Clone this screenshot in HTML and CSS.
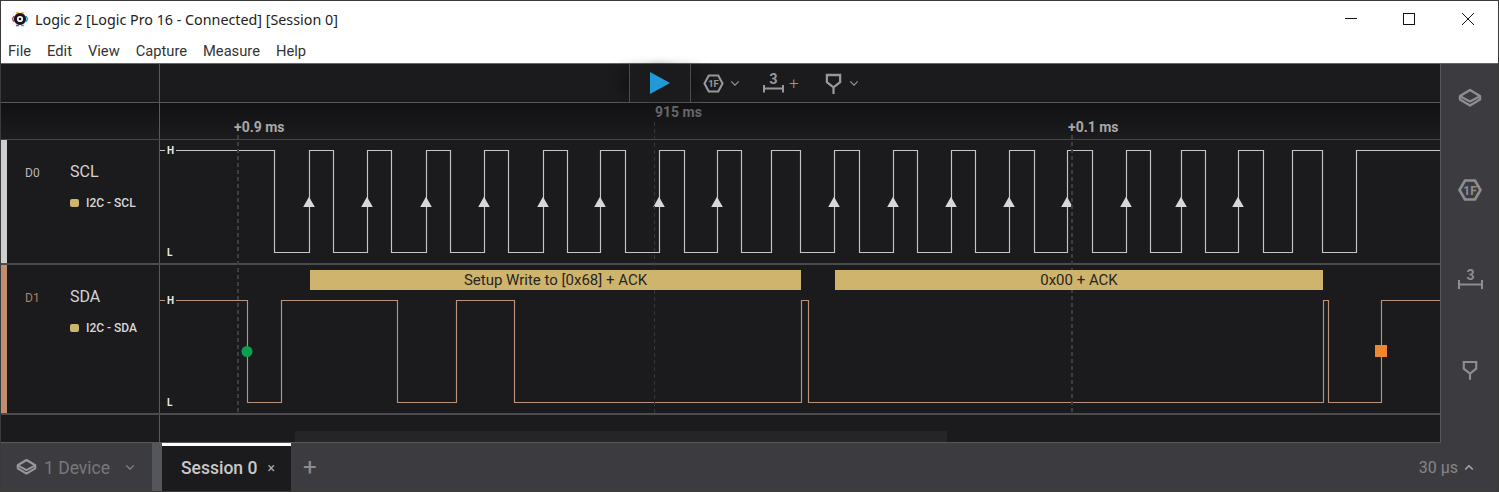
FILE: index.html
```html
<!DOCTYPE html>
<html lang="en">
<head>
<meta charset="utf-8">
<title>Logic 2</title>
<link rel="stylesheet" href="styles.css">
</head>
<body>
<svg class="defs" width="0" height="0" aria-hidden="true">
  <symbol id="i-layers" viewBox="0 0 24 20">
    <path d="M12 2 L22 8 V11.5 L12 17.5 L2 11.5 V8 Z" fill="none" stroke="currentColor" stroke-width="2.400" stroke-linejoin="round"/>
    <path d="M2.5 8.5 L12 13.5 L21.500 8.500" fill="none" stroke="currentColor" stroke-width="2.200"/>
  </symbol>
  <symbol id="i-trigger" viewBox="0 0 18 22">
    <path d="M2 2 H16 V9.500 L9 15 L2 9.500 Z M9 15 V22" fill="none" stroke="currentColor" stroke-width="2.400"/>
  </symbol>
  <symbol id="i-chev" viewBox="0 0 12 8">
    <path d="M1.500 1.500 L6 6 L10.500 1.500" fill="none" stroke="currentColor" stroke-width="1.400"/>
  </symbol>
</svg>

<div class="window">
  <header class="titlebar">
    <svg class="app-icon" viewBox="0 0 18 18">
      <rect x="0.500" y="0.500" width="17" height="17" rx="4" fill="#f7f7f7"/>
      <path d="M3 6 L1.500 9 L3 12" fill="none" stroke="#e33c8b" stroke-width="1.500"/>
      <path d="M15 6 L16.500 9 L15 12" fill="none" stroke="#2a9ee0" stroke-width="1.500"/>
      <path d="M5 3 H8" stroke="#f0a020" stroke-width="1.500"/>
      <path d="M10 3 H13" stroke="#e8c020" stroke-width="1.500"/>
      <path d="M5 15.500 H8" stroke="#7a4fd0" stroke-width="1.500"/>
      <path d="M10 15.500 H13" stroke="#2fb8c8" stroke-width="1.500"/>
      <circle cx="9" cy="9" r="4.600" fill="none" stroke="#16161a" stroke-width="3"/>
      <circle cx="9" cy="9" r="1.300" fill="#16161a"/>
    </svg>
    <span class="title-text">Logic 2 [Logic Pro 16 - Connected] [Session 0]</span>
    <div class="win-controls">
      <svg class="win-btn" viewBox="0 0 12 12"><path d="M0 5.500 H12" stroke="#111" stroke-width="1"/></svg>
      <svg class="win-btn" viewBox="0 0 12 12"><rect x="0.500" y="0.500" width="11" height="11" fill="none" stroke="#111" stroke-width="1"/></svg>
      <svg class="win-btn win-close" viewBox="0 0 12 12"><path d="M0 0 L12 12 M12 0 L0 12" stroke="#111" stroke-width="1"/></svg>
    </div>
  </header>
  <nav class="menubar">
    <span>File</span><span>Edit</span><span>View</span><span>Capture</span><span>Measure</span><span>Help</span>
  </nav>

  <main class="main">
    <section class="workspace">
      <div class="toolbar-row">
        <div class="gutter"></div>
        <div class="toolbar">
          <div class="play-box">
            <svg class="play" viewBox="0 0 20 22"><path d="M0 0 L20 11 L0 22 Z" fill="#209bd8"/></svg>
          </div>
          <div class="tools">
            <svg class="tool-hex" viewBox="0 0 22 20">
              <path d="M6 1.500 H16 L20.500 10 L16 18.500 H6 L1.500 10 Z" fill="none" stroke="currentColor" stroke-width="2.200"/>
              <text x="11" y="14" text-anchor="middle" class="hex-label">1F</text>
            </svg>
            <svg class="chev chev-a"><use href="#i-chev"/></svg>
            <svg class="tool-measure" viewBox="0 -4 21 28">
              <text x="10.500" y="10.500" text-anchor="middle" class="measure-label">3</text>
              <path d="M1 12 V19.500 M20 12 V19.500 M1 15.500 H20" fill="none" stroke="currentColor" stroke-width="2"/>
            </svg>
            <span class="tool-plus">+</span>
            <svg class="tool-trigger"><use href="#i-trigger"/></svg>
            <svg class="chev chev-b"><use href="#i-chev"/></svg>
          </div>
        </div>
      </div>

      <div class="ruler-row">
        <div class="gutter"></div>
        <div class="ruler">
          <span class="tick tick-a">+0.9 ms</span>
          <span class="tick tick-mid">915 ms</span>
          <span class="tick tick-b">+0.1 ms</span>
        </div>
      </div>

      <div class="channel channel-scl">
        <div class="chan-label">
          <span class="swatch swatch-scl"></span>
          <span class="chan-id">D0</span>
          <div class="chan-info">
            <div class="chan-name">SCL</div>
            <div class="analyzer"><span class="dot"></span>I2C - SCL</div>
          </div>
        </div>
        <div class="lane">
          <svg class="wave" viewBox="160 140 1280 123">
            <path class="wave-scl" d="M160 150.500 H274.500 V252.500 H309.500 V150.500 H333.500 V252.500 H367.500 V150.500 H391.500 V252.500 H426.500 V150.500 H450.500 V252.500 H484.500 V150.500 H508.500 V252.500 H543.500 V150.500 H567.500 V252.500 H600.500 V150.500 H625.500 V252.500 H659.500 V150.500 H684.500 V252.500 H717.500 V150.500 H741.500 V252.500 H771.500 V150.500 H800.500 V252.500 H834.500 V150.500 H859.500 V252.500 H893.500 V150.500 H917.500 V252.500 H951.500 V150.500 H975.500 V252.500 H1009.500 V150.500 H1034.500 V252.500 H1067.500 V150.500 H1092.500 V252.500 H1126.500 V150.500 H1150.500 V252.500 H1181.500 V150.500 H1205.500 V252.500 H1238.500 V150.500 H1263.500 V252.500 H1292.500 V150.500 H1322.500 V252.500 H1356.500 V150.500 H1440"/>
            <path class="edge" d="M309 196.800 l5.800 10.300 h-11.600 Z M367 196.800 l5.800 10.300 h-11.600 Z M426 196.800 l5.800 10.300 h-11.600 Z M484 196.800 l5.800 10.300 h-11.600 Z M543 196.800 l5.800 10.300 h-11.600 Z M600 196.800 l5.800 10.300 h-11.600 Z M659 196.800 l5.800 10.300 h-11.600 Z M717 196.800 l5.800 10.300 h-11.600 Z M834 196.800 l5.800 10.300 h-11.600 Z M893 196.800 l5.800 10.300 h-11.600 Z M951 196.800 l5.800 10.300 h-11.600 Z M1009 196.800 l5.800 10.300 h-11.600 Z M1067 196.800 l5.800 10.300 h-11.600 Z M1126 196.800 l5.800 10.300 h-11.600 Z M1181 196.800 l5.800 10.300 h-11.600 Z M1238 196.800 l5.800 10.300 h-11.600 Z"/>
          </svg>
          <span class="level level-h-scl">H</span>
          <span class="level level-l-scl">L</span>
        </div>
      </div>

      <div class="channel channel-sda">
        <div class="chan-label">
          <span class="swatch swatch-sda"></span>
          <span class="chan-id chan-id-sda">D1</span>
          <div class="chan-info">
            <div class="chan-name">SDA</div>
            <div class="analyzer"><span class="dot"></span>I2C - SDA</div>
          </div>
        </div>
        <div class="lane">
          <svg class="wave" viewBox="160 265 1280 148">
            <path class="wave-sda" d="M160 300.500 H247.500 V402.500 H281.500 V300.500 H397.500 V402.500 H456.500 V300.500 H514.500 V402.500 H801.500 V300.500 H808.500 V402.500 H1323.500 V300.500 H1328.500 V402.500 H1381.500 V300.500 H1440"/>
            <circle cx="247" cy="351.500" r="5.500" fill="#0aa050"/>
            <rect x="1375" y="345" width="12" height="12" fill="#f0862e"/>
          </svg>
          <span class="level level-h-sda">H</span>
          <span class="level level-l-sda">L</span>
          <div class="frame frame-a">Setup Write to [0x68] + ACK</div>
          <div class="frame frame-b">0x00 + ACK</div>
        </div>
      </div>

      <div class="filler-row">
        <div class="gutter"></div>
        <div class="filler"><div class="scrollbar"></div></div>
      </div>

      <i class="guide guide-a"></i>
      <i class="guide guide-mid"></i>
      <i class="guide guide-b"></i>
    </section>

    <aside class="sidebar">
      <svg class="side-icon side-layers"><use href="#i-layers"/></svg>
      <svg class="side-icon side-hex" viewBox="0 0 24 22">
        <path d="M7 1.500 H17 L22.500 11 L17 20.500 H7 L1.500 11 Z" fill="none" stroke="currentColor" stroke-width="2.600"/>
        <text x="12" y="15.500" text-anchor="middle" class="hex-label-lg">1F</text>
      </svg>
      <svg class="side-icon side-measure" viewBox="0 -4 25 23">
        <text x="12.500" y="10" text-anchor="middle" class="measure-label-lg">3</text>
        <path d="M1 10 V19 M24 10 V19 M1 14.500 H24" fill="none" stroke="currentColor" stroke-width="2"/>
      </svg>
      <svg class="side-icon side-trigger"><use href="#i-trigger"/></svg>
    </aside>
  </main>

  <footer class="bottombar">
    <div class="device">
      <svg class="device-icon"><use href="#i-layers"/></svg>
      <span class="device-name">1 Device</span>
      <svg class="device-chev"><use href="#i-chev"/></svg>
    </div>
    <div class="tab">
      <span class="tab-name">Session 0</span>
      <span class="tab-close">×</span>
    </div>
    <span class="tab-add">+</span>
    <div class="timing">
      <span>30 µs</span>
      <svg class="timing-chev" viewBox="0 0 12 8"><path d="M1.500 6.500 L6 2 L10.500 6.500" fill="none" stroke="currentColor" stroke-width="1.800"/></svg>
    </div>
  </footer>
</div>
</body>
</html>
```
FILE: styles.css
```css
* { box-sizing: border-box; }

html, body {
  margin: 0;
  height: 100%;
  overflow: hidden;
}

body {
  background: #4a4a4a;
  font-family: Roboto, "Liberation Sans", sans-serif;
}

.defs { position: absolute; }

.window {
  width: 1499px;
  height: 492px;
  padding: 1px;
  display: flex;
  flex-direction: column;
  background: #3a3a3a;
}

/* title + menu */
.titlebar {
  height: 36px;
  flex: none;
  background: #fff;
  display: flex;
  align-items: center;
  padding-left: 10px;
}

.app-icon { width: 18px; height: 18px; flex: none; }

.title-text {
  margin-left: 6px;
  font-family: "Noto Sans", sans-serif;
  font-size: 14.300px;
  color: #222;
}

.win-controls {
  margin-left: auto;
  display: flex;
  gap: 46px;
  padding-right: 24px;
  align-items: center;
}

.win-btn { width: 12px; height: 12px; display: block; }
.win-close { margin-left: 1px; }

.menubar {
  height: 27px;
  flex: none;
  background: #fff;
  display: flex;
  gap: 16px;
  padding: 2px 0 0 7px;
  align-items: center;
  font-size: 14.700px;
  color: #333;
  border-bottom: 1px solid #666;
}

.main {
  flex: 1;
  min-height: 0;
  display: flex;
}

/* workspace */
.workspace {
  flex: 1;
  min-width: 0;
  position: relative;
  display: flex;
  flex-direction: column;
  background: #1b1b1e;
}

.gutter {
  width: 159px;
  flex: none;
  border-right: 1px solid #5a5a5c;
}

.toolbar-row {
  height: 39px;
  flex: none;
  display: flex;
  border-bottom: 1px solid #58585a;
}

.toolbar {
  flex: 1;
  position: relative;
  display: flex;
  justify-content: flex-start;
}

.play-box {
  margin-left: 469px;
  width: 62px;
  height: 38px;
  display: flex;
  align-items: center;
  justify-content: center;
  border-left: 1px solid #4c4c4e;
  border-right: 1px solid #4c4c4e;
  box-shadow: -14px 0 14px -8px #111112, 14px 0 14px -8px #111112;
  padding-right: 1px;
}

.play { width: 20px; height: 22px; display: block; }

.tools {
  display: flex;
  align-items: center;
  color: #98989c;
  height: 38px;
}

.tool-hex { width: 21px; height: 19px; margin-left: 12px; }

.hex-label { font: 700 10px Roboto, sans-serif; fill: currentColor; }
.hex-label-lg { font: 700 12px Roboto, sans-serif; fill: currentColor; }
.measure-label { font: 700 14.500px Roboto, sans-serif; fill: currentColor; }
.measure-label-lg { font: 700 14px Roboto, sans-serif; fill: currentColor; }

.chev { width: 10px; height: 7px; }
.chev-a { margin-left: 6px; }
.chev-b { margin-left: 7px; }

.tool-measure { width: 21px; height: 28px; margin-left: 23px; }

.tool-plus {
  margin-left: 5px;
  font-size: 17px;
  font-weight: 300;
  width: 10px;
}

.tool-trigger { width: 17px; height: 21px; margin-left: 26px; }

/* ruler */
.ruler-row {
  height: 37px;
  flex: none;
  display: flex;
  border-bottom: 1px solid #48484a;
}

.ruler {
  flex: 1;
  position: relative;
  background: linear-gradient(#111113, #1c1c1e);
}

.ruler-row .gutter {
  background: linear-gradient(#111113, #1c1c1e);
}

.tick {
  position: absolute;
  font-size: 14px;
  font-weight: 700;
  line-height: 15px;
  white-space: nowrap;
  color: #a8a8a8;
}

.tick-a { left: 74px; top: 17px; }
.tick-b { left: 908px; top: 17px; }
.tick-mid { left: 495px; top: 2px; color: #66666a; }

/* channels */
.channel {
  display: flex;
  flex: none;
  border-bottom: 2px solid #4c4c50;
}

.channel-scl { height: 125px; }
.channel-sda { height: 150px; }

.chan-label {
  width: 159px;
  flex: none;
  display: flex;
  border-right: 1px solid #5a5a5c;
}

.swatch { width: 6px; flex: none; }
.swatch-scl { background: #cfcfcf; }
.swatch-sda { background: #c08d70; }

.chan-id {
  width: 45px;
  margin-left: 18px;
  padding-top: 26px;
  font-size: 12px;
  color: #b8b8b8;
}

.chan-id-sda { color: #b47f62; }

.chan-info { padding-top: 22px; }

.chan-name {
  font-size: 16px;
  line-height: 19px;
  color: #d4d4d4;
}

.analyzer {
  display: flex;
  align-items: center;
  margin-top: 15px;
  font-size: 12px;
  font-weight: 500;
  line-height: 14px;
  color: #d8d8d8;
}

.dot {
  width: 9px;
  height: 8px;
  border-radius: 2px;
  margin-right: 7px;
  background: #cfb46e;
}

.lane {
  flex: 1;
  min-width: 0;
  position: relative;
}

.wave { display: block; width: 100%; height: 100%; }

.wave-scl { fill: none; stroke: #c6c6c6; stroke-width: 1.150; }
.wave-sda { fill: none; stroke: #bb937c; stroke-width: 1.150; }
.edge { fill: #d8d8d8; }

.level {
  position: absolute;
  left: 5px;
  padding: 0 2px;
  font-size: 10px;
  font-weight: 700;
  line-height: 10px;
  color: #e8e8e8;
  background: #1b1b1e;
}

.level-h-scl { top: 6px; }
.level-l-scl { top: 108px; }
.level-h-sda { top: 31px; }
.level-l-sda { top: 133px; }

.frame {
  position: absolute;
  z-index: 1;
  top: 5px;
  height: 20px;
  background: #cfb46e;
  color: #27261f;
  font-size: 15px;
  line-height: 20px;
  text-align: center;
  white-space: nowrap;
}

.frame-a { left: 150px; width: 491px; }
.frame-b { left: 675px; width: 488px; }

.filler-row {
  flex: 1;
  display: flex;
  border-bottom: 1px solid #58585a;
}

.filler { flex: 1; position: relative; }

.scrollbar {
  position: absolute;
  left: 135px;
  bottom: 0;
  width: 652px;
  height: 11px;
  background: #252528;
}

/* dashed time guides */
.guide {
  position: absolute;
  top: 71px;
  width: 2px;
  height: 278px;
  background: repeating-linear-gradient(#3e3e41 0 4px, transparent 4px 7px);
}

.guide-a { left: 236px; }
.guide-b { left: 1070px; }
.guide-mid {
  left: 653px;
  top: 58px;
  width: 1px;
  height: 291px;
  background: repeating-linear-gradient(#37373a 0 4px, transparent 4px 7px);
}

/* sidebar */
.sidebar {
  width: 58px;
  flex: none;
  display: flex;
  flex-direction: column;
  align-items: center;
  padding-top: 24px;
  padding-left: 1px;
  background: #3c3c40;
  border-left: 1px solid #58585a;
  color: #8e8e92;
}

.side-icon { display: block; flex: none; }
.side-layers { width: 24px; height: 20px; }
.side-hex { width: 24px; height: 22px; margin-top: 71px; }
.side-measure { width: 25px; height: 23px; margin-top: 65px; }
.side-trigger { width: 16px; height: 20px; margin-top: 71px; }

/* bottom */
.bottombar {
  height: 48px;
  flex: none;
  display: flex;
  align-items: center;
  background: #3c3c40;
}

.device {
  width: 161px;
  height: 100%;
  flex: none;
  display: flex;
  align-items: center;
  padding-left: 15px;
  color: #78787c;
  border-right: 10px solid #55555c;
}

.device-icon { width: 21px; height: 18px; color: #98989c; }
.device-name { margin-left: 7px; margin-top: 1px; font-size: 17.500px; }
.device-chev { width: 10px; height: 7px; margin-left: 15px; color: #8c8c90; }

.tab {
  width: 129px;
  height: 100%;
  flex: none;
  display: flex;
  align-items: center;
  padding: 0 0 1px 19px;
  background: #1b1b1e;
  border-top: 3px solid #fff;
}

.tab-name { font-size: 17.500px; font-weight: 500; color: #c8c8c8; }
.tab-close { margin-left: 10px; font-size: 14px; color: #a8a8a8; }

.tab-add {
  margin-left: 12px;
  font-size: 24px;
  color: #8c8c90;
}

.timing {
  margin-left: auto;
  padding-right: 24px;
  display: flex;
  align-items: center;
  gap: 6px;
  font-size: 16px;
  color: #86868a;
}

.timing-chev { width: 10px; height: 7px; color: #a8a8ac; }
```
